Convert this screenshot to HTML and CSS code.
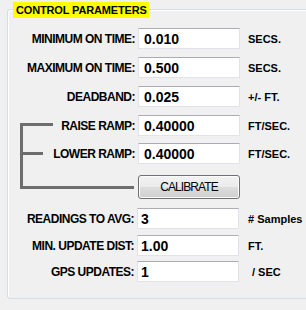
FILE: index.html
```html
<!DOCTYPE html>
<html>
<head>
  <title>Control Parameters</title>
  <link rel="stylesheet" href="styles.css">
</head>
<body>
  <div class="group">
    <div class="legend">CONTROL PARAMETERS</div>

    <div class="rows">
      <div class="row">
        <label class="label">MINIMUM ON TIME:</label>
        <input class="field" value="0.010">
        <span class="unit">SECS.</span>
      </div>
      <div class="row">
        <label class="label">MAXIMUM ON TIME:</label>
        <input class="field" value="0.500">
        <span class="unit">SECS.</span>
      </div>
      <div class="row">
        <label class="label">DEADBAND:</label>
        <input class="field" value="0.025">
        <span class="unit">+/- FT.</span>
      </div>

      <!-- ramp rows share the bracket on the left -->
      <div class="ramp">
        <svg class="bracket" width="127" height="84" viewBox="0 0 127 84">
          <path d="M45 9.5H13.5V72.5H126M13.5 38.5H35" fill="none" stroke="#6e6e6e" stroke-width="3"/>
        </svg>
        <div class="row ramp-raise">
          <label class="label">RAISE RAMP:</label>
          <input class="field" value="0.40000">
          <span class="unit">FT/SEC.</span>
        </div>
        <div class="row ramp-lower">
          <label class="label">LOWER RAMP:</label>
          <input class="field" value="0.40000">
          <span class="unit">FT/SEC.</span>
        </div>
        <div class="row ramp-button">
          <span></span>
          <button class="btn">CALIBRATE</button>
        </div>
      </div>

      <div class="row compact">
        <label class="label">READINGS TO AVG:</label>
        <input class="field" value="3">
        <span class="unit">#&nbsp;Samples</span>
      </div>
      <div class="row compact step-27">
        <label class="label">MIN. UPDATE DIST:</label>
        <input class="field" value="1.00">
        <span class="unit">FT.</span>
      </div>
      <div class="row compact step-26">
        <label class="label">GPS UPDATES:</label>
        <input class="field" value="1">
        <span class="unit unit-sec">/ SEC</span>
      </div>
    </div>
  </div>
</body>
</html>
```

FILE: styles.css
```css
body {
  margin: 0;
  padding: 9px 0 0 7px;
  background: #f0f0f0;
  font-family: 'Liberation Sans', Arial, sans-serif;
  color: #000;
  overflow: hidden;
}

.group {
  position: relative;
  border: 1px solid #d5dfe5;
  border-right: none;
  border-radius: 3px 0 0 3px;
  box-shadow: inset 1px 1px 0 #fff, 0 1px 0 #fff;
  padding: 18px 0 16px 0;
}

.legend {
  position: absolute;
  top: -8px;
  left: 5px;
  background: #ffff00;
  font-size: 11px;
  font-weight: bold;
  line-height: 16px;
  letter-spacing: -0.15px;
  padding: 0 2px 0 3px;
}

.rows {
  display: flex;
  flex-direction: column;
  gap: 8px;
}

.row {
  display: grid;
  grid-template-columns: 127px 102px auto;
  column-gap: 3px;
  align-items: center;
  height: 21px;
}

.label {
  text-align: right;
  font-size: 12px;
  font-weight: bold;
  letter-spacing: -0.5px;
  white-space: nowrap;
}

.field {
  box-sizing: border-box;
  width: 102px;
  height: 21px;
  margin: 0;
  padding: 0 0 0 5px;
  border: 1px solid #e2e3ea;
  border-top-color: #abadb3;
  background: #fff;
  font-family: 'Liberation Sans', Arial, sans-serif;
  font-size: 14px;
  font-weight: bold;
  color: #000;
  outline: none;
}

.unit {
  padding-left: 5px;
  font-size: 11px;
  font-weight: bold;
  white-space: nowrap;
}

.ramp {
  display: grid;
  grid-template-columns: 1fr;
  row-gap: 8px;
  margin-bottom: 1px;
}

.bracket {
  grid-row: 1 / 4;
  grid-column: 1;
  align-self: start;
  display: block;
}

.ramp-raise {
  grid-row: 1;
  grid-column: 1;
}

.ramp-lower {
  grid-row: 2;
  grid-column: 1;
  margin-top: -1px;
}

.ramp-button {
  grid-row: 3;
  grid-column: 1;
  height: 24px;
  margin-top: 2px;
}

.btn {
  box-sizing: border-box;
  width: 102px;
  height: 24px;
  margin: 0;
  border: 1px solid #707070;
  border-radius: 3px;
  background: linear-gradient(#f2f2f2 0%, #ebebeb 50%, #dddddd 50%, #cfcfcf 100%);
  box-shadow: inset 0 0 0 1px #fcfcfc;
  font-family: 'Liberation Sans', Arial, sans-serif;
  font-size: 12px;
  letter-spacing: -0.9px;
  color: #000;
}

.compact {
  grid-template-columns: 126px 103px auto;
}

.compact .field {
  padding-left: 3px;
}

.step-27 {
  margin-top: -2px;
}

.step-26 {
  margin-top: -3px;
}

.unit-sec {
  padding-left: 9px;
}
```
